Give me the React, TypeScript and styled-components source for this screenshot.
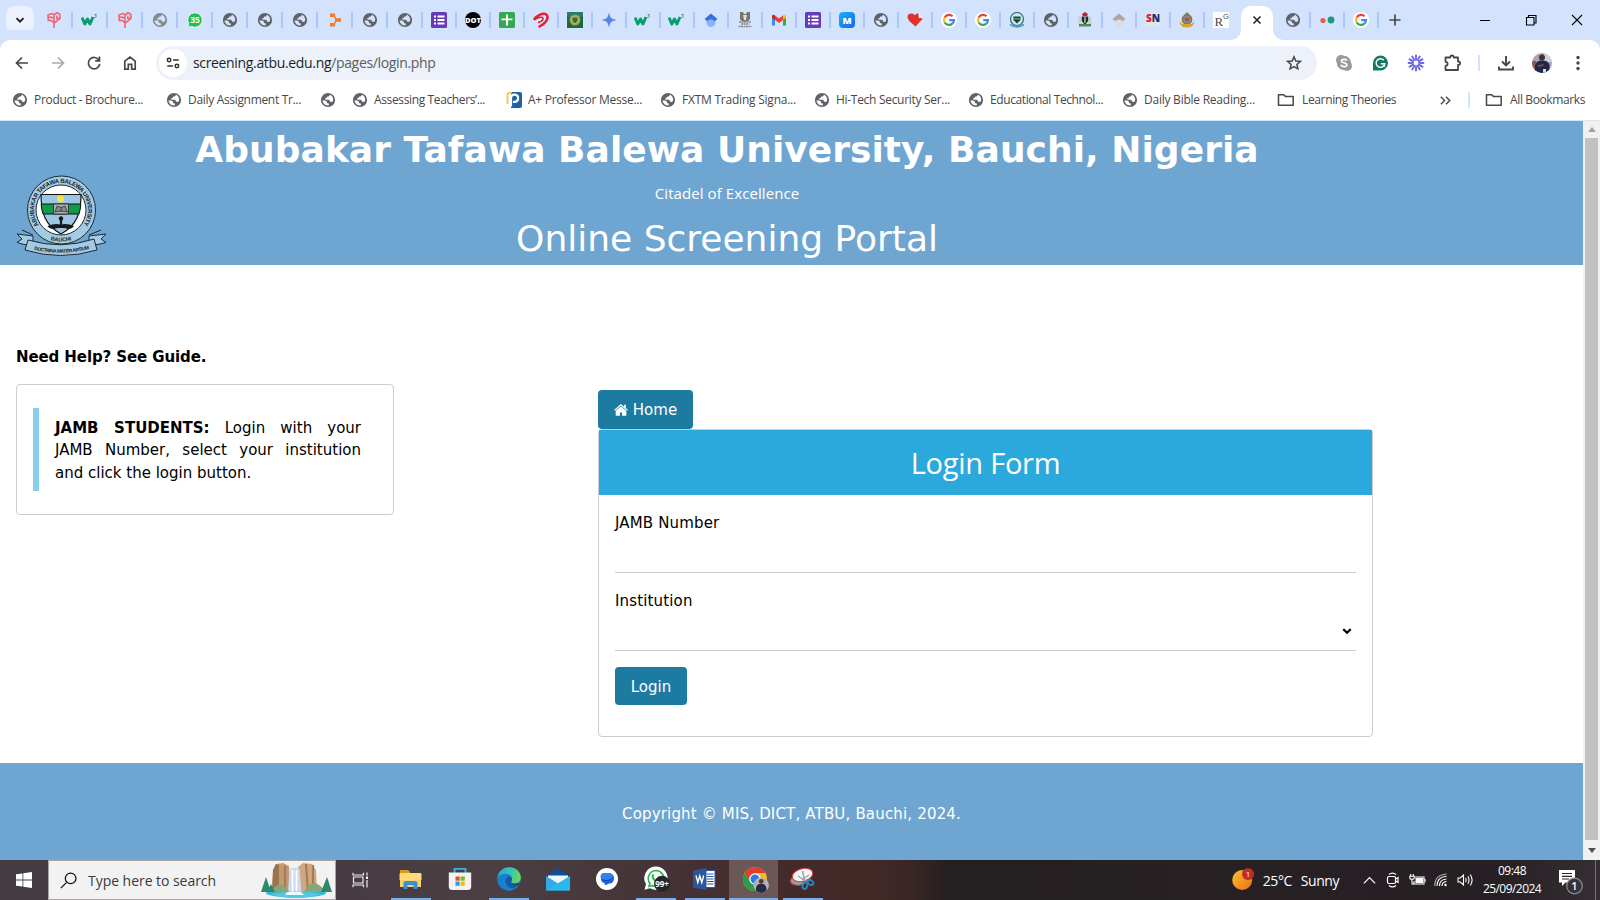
import React from "react";
import styled, { createGlobalStyle } from "styled-components";

const GlobalStyle = createGlobalStyle`
  *, *::before, *::after { box-sizing: border-box; }
  html, body { margin: 0; padding: 0; overflow: hidden; background: #fff; }
  svg { display: block; flex: none; }
`;

const ui = `"Open Sans", "Noto Sans", sans-serif`;
const verdana = `"DejaVu Sans", "Liberation Sans", sans-serif`;

const Screen = styled.div`
  width: 1600px;
  height: 900px;
  display: flex;
  flex-direction: column;
  overflow: hidden;
  font-family: ${ui};
`;

/* ---------- tab strip ---------- */
const TabStrip = styled.div`
  height: 40px;
  background: #d3e3fd;
  display: flex;
  align-items: center;
`;
const TabSearch = styled.div`
  width: 28px;
  height: 28px;
  margin: 0 3px 0 6px;
  border-radius: 9px;
  background: #ecf2fd;
  display: grid;
  place-items: center;
`;
const Tab = styled.div<{ $w: number; $line?: boolean }>`
  width: ${(p) => p.$w}px;
  height: 16px;
  display: flex;
  align-items: center;
  justify-content: center;
  border-right: 2px solid ${(p) => (p.$line === false ? "transparent" : "#a8c7fa")};
`;
const ActiveTab = styled.div`
  width: 32px;
  height: 34px;
  margin: 0 4px 0 2px;
  align-self: flex-end;
  background: #fff;
  border-radius: 10px 10px 0 0;
  display: grid;
  place-items: center;
  padding-bottom: 6px;
  position: relative;
  &::before, &::after {
    content: "";
    position: absolute;
    bottom: 0;
    width: 10px;
    height: 10px;
  }
  &::before { left: -10px; background: radial-gradient(circle at 0 0, transparent 9.5px, #fff 10px); }
  &::after { right: -10px; background: radial-gradient(circle at 100% 0, transparent 9.5px, #fff 10px); }
`;
const WindowControls = styled.div`
  margin-left: auto;
  display: flex;
`;

/* ---------- toolbar ---------- */
const Chrome = styled.div`
  background: #fff;
  box-shadow: 0 -10px 0 #d3e3fd;
  border-radius: 10px 10px 0 0;
`;
const Toolbar = styled.div`
  height: 46px;
  display: flex;
  align-items: center;
  padding: 0 4px;
`;
const ToolSlot = styled.div<{ $w?: number }>`
  width: ${(p) => p.$w ?? 36}px;
  display: flex;
  justify-content: center;
`;
const Omnibox = styled.div`
  width: 1161px;
  height: 34px;
  margin: 0 9px 0 8px;
  border-radius: 17px;
  background: #ecf1fa;
  display: flex;
  align-items: center;
  padding: 0 15px 0 3px;
`;
const SiteChip = styled.div`
  width: 28px;
  height: 28px;
  border-radius: 50%;
  background: #fff;
  display: grid;
  place-items: center;
  margin-right: 6px;
`;
const Text = styled.span<{ $size: number; $color?: string; $ls?: number }>`
  font-size: ${(p) => p.$size}px;
  color: ${(p) => p.$color ?? "#474747"};
  letter-spacing: ${(p) => p.$ls ?? 0}px;
  white-space: nowrap;
`;
const BarText = styled(Text)`
  padding-bottom: 2px;
`;
const Path = styled.span`
  color: #5a5d62;
`;
const Grow = styled.div`
  flex: 1;
`;
const Rule = styled.div<{ $m: string }>`
  width: 2px;
  height: 16px;
  background: #d3e3fd;
  margin: ${(p) => p.$m};
`;

/* ---------- bookmarks ---------- */
const Bookmarks = styled.div`
  height: 34px;
  display: flex;
  align-items: center;
  padding: 0 0 6px 12px;
`;
const Bookmark = styled.div<{ $w: number; $gap?: number }>`
  width: ${(p) => p.$w}px;
  display: flex;
  align-items: center;
  gap: ${(p) => p.$gap ?? 6}px;
`;
const IconBox = styled.div`
  width: 16px;
  display: flex;
  justify-content: center;
`;

/* ---------- page ---------- */
const Viewport = styled.div`
  flex: 1;
  display: flex;
  min-height: 0;
  border-top: 1px solid #dbe7f0;
`;
const Page = styled.div`
  width: 1583px;
  display: flex;
  flex-direction: column;
  font-family: ${verdana};
  font-size: 15px;
  line-height: 22.5px;
  color: #000;
`;
const Header = styled.header`
  height: 144px;
  background: #6fa5d1;
  color: #fff;
  display: flex;
`;
const LogoCol = styled.div`
  width: 132px;
  padding: 53px 0 0 16px;
`;
const TitleCol = styled.div`
  width: 1190px;
  text-align: center;
  white-space: nowrap;
`;
const University = styled.h1`
  margin: 2px 0 0;
  font-size: 36px;
  line-height: 54px;
  letter-spacing: 0.04px;
`;
const Motto = styled.div`
  margin-top: 5px;
  line-height: 22px;
  font-family: ${ui};
  font-size: 15px;
  letter-spacing: 0.08px;
`;
const Portal = styled.div`
  margin-top: 8px;
  font-size: 36px;
  line-height: 54px;
`;
const Main = styled.main`
  flex: 1;
  display: flex;
`;
const Help = styled.section`
  width: 378px;
  margin: 81px 204px 0 16px;
`;
const HelpTitle = styled.div`
  font-weight: 700;
  line-height: 23px;
  letter-spacing: -0.1px;
`;
const HelpCard = styled.div`
  margin-top: 15px;
  height: 131px;
  border: 1px solid #ccc;
  border-radius: 4px;
  padding: 23px 16px;
`;
const Quote = styled.div`
  height: 83px;
  border-left: 6px solid #87ceeb;
  padding: 8.8px 16px 7px;
`;
const QuoteLine = styled.div<{ $last?: boolean }>`
  text-align-last: ${(p) => (p.$last ? "left" : "justify")};
  white-space: nowrap;
`;
const FormCol = styled.section`
  width: 775px;
  padding-top: 125px;
`;
const Button = styled.button<{ $w: number; $h: number; $top?: number }>`
  width: ${(p) => p.$w}px;
  height: ${(p) => p.$h}px;
  border: 0;
  border-radius: 4px;
  background: #1d7ba2;
  color: #fff;
  font: 15px ${verdana};
  padding: ${(p) => p.$top ?? 0}px 0 0;
  display: flex;
  align-items: center;
  justify-content: center;
  gap: 5px;
`;
const FormCard = styled.div`
  height: 308px;
  border: 1px solid #ccc;
  border-radius: 4px;
  background: #fff;
`;
const FormTitle = styled.h2`
  height: 65px;
  margin: 0;
  background: #2ba9dc;
  color: #fff;
  font: 400 29px/66px ${ui};
  letter-spacing: -0.25px;
  text-align: center;
`;
const FormBody = styled.div`
  padding: 17px 16px 16px;
`;
const Label = styled.div`
  line-height: 23px;
  letter-spacing: 0.15px;
`;
const Field = styled.div`
  height: 38px;
  border-bottom: 1px solid #ccc;
  margin-bottom: 17px;
  padding: 0 3px 2px 0;
  display: flex;
  align-items: center;
  justify-content: flex-end;
`;
const Submit = styled.div`
  margin-top: -1px;
`;
const Footer = styled.footer`
  height: 97px;
  background: #6fa5d1;
  color: #fff;
  display: flex;
  align-items: center;
  justify-content: center;
  padding-top: 6px;
  letter-spacing: 0.17px;
`;
const Scrollbar = styled.div`
  width: 17px;
  background: #f1f1f1;
  display: flex;
  flex-direction: column;
  align-items: center;
`;
const ScrollEnd = styled.div<{ $h: number }>`
  height: ${(p) => p.$h}px;
  display: grid;
  place-items: center;
`;
const Thumb = styled.div`
  width: 13px;
  flex: 1;
  background: #c1c1c1;
`;

/* ---------- taskbar ---------- */
const Taskbar = styled.div`
  height: 40px;
  display: flex;
  background: linear-gradient(90deg, #463c43 0, #463c42 350px, #4b3f42 500px, #46363a 620px, #43292a 800px, #422927 870px, #3a2625 910px, #241f20 950px, #272124 1240px, #262024 1500px, #352f33 1600px);
`;
const Start = styled.div`
  width: 48px;
  display: grid;
  place-items: center;
`;
const Search = styled.div`
  width: 288px;
  height: 40px;
  background: #f2f2f2;
  border: 1px solid #a9a5a7;
  display: flex;
  align-items: center;
  gap: 11px;
  padding: 0 3px 0 11px;
`;
const TaskViewSlot = styled.div`
  width: 50px;
  display: grid;
  place-items: center;
`;
const TaskSlot = styled.div<{ $line?: boolean; $active?: boolean }>`
  width: 49px;
  display: flex;
  flex-direction: column;
  align-items: center;
  background: ${(p) => (p.$active ? "#6b5755" : "transparent")};
  &::after {
    content: "";
    width: ${(p) => (p.$active ? 49 : 40)}px;
    height: 2px;
    background: ${(p) => (p.$line ? "#77aef2" : "transparent")};
  }
`;
const TaskIcon = styled.div`
  height: 38px;
  display: grid;
  place-items: center;
`;
const Tray = styled.div`
  margin-left: auto;
  display: flex;
  align-items: center;
`;
const WeatherGroup = styled.div`
  display: flex;
  align-items: center;
  gap: 9px;
  margin-right: 18px;
`;
const TraySlot = styled.div<{ $w: number }>`
  width: ${(p) => p.$w}px;
  display: flex;
  justify-content: center;
`;
const NoticeSlot = styled(TraySlot)`
  padding: 4px 1px 0 0;
`;
const Clock = styled.div`
  width: 70px;
  display: flex;
  flex-direction: column;
  align-items: center;
  line-height: 18px;
`;
const ShowDesktop = styled.div`
  width: 5px;
  height: 40px;
  border-left: 1px solid #77737a;
`;

/* ---------- icons ---------- */
const Globe = ({ c = "#5f6368", bg = "#fff" }: { c?: string; bg?: string }) => (
  <svg width="16" height="16" viewBox="0 0 16 16">
    <circle cx="8" cy="8" r="7.1" fill={c} />
    <path d="M9.800 2.500c0 1.500-.6 2-2 2.100-.9.100-1.100.5-1 1.500-.9.300-1.800.2-2 1 .1.700 1 .6 2.200.6h1.500c1 .1 1.300.7 1.400 1.600.1.700.6.700 1.300.700 1.200-.1 1.800-.8 2-2 .1-2.400-1.200-4.500-3.400-5.500z" fill={bg} />
    <path d="M2.500 8.500h2.500c1.300.1 1.800.7 1.900 1.700.1.800.6.900 1.300 1 .8.300.7 1.200.5 2.200-3.100.4-5.800-1.800-6.200-4.900z" fill={bg} />
  </svg>
);
const tabBg = "#d3e3fd";
const Tree = () => (
  <svg width="16" height="18" viewBox="0 0 16 18" fill="none" stroke="#ee6670" strokeWidth="1.600">
    <path d="M8 17V3M8 3.500L5.500 2.500 2 4l.3 5.500 2.700-.2 3 2.500M2.300 6.500l2.700-.5 3 1.500M8.500 3.500L11 1.800l2.800 1.400.2 4.300-2.500 2.200L8 12M10.800 4.500v3h2.500" />
  </svg>
);
const W3 = () => (
  <svg width="18" height="16" viewBox="0 0 18 16">
    <path d="M1 5.500l2.800 6.500L6.500 7l2.500 5L12 5" fill="none" stroke="#0a9c6c" strokeWidth="2.900" strokeLinejoin="round" />
    <path d="M13.500 2.500h2l-1 1.500c1.400.3 1 2-1.200 1.500" fill="none" stroke="#3aa78a" strokeWidth="1" />
  </svg>
);
const Badge35 = () => (
  <svg width="16" height="16" viewBox="0 0 16 16">
    <path d="M8 .8a7.200 7.200 0 1 1-3.500 13.500L.8 15.300l1-3.600A7.200 7.200 0 0 1 8 .8z" fill="#1fc14b" stroke="#fff" strokeWidth=".8" />
    <text x="8" y="11" fontSize="8.500" fontWeight="700" textAnchor="middle" fill="#fff" fontFamily="Open Sans">35</text>
  </svg>
);
const Zap = () => (
  <svg width="16" height="16" viewBox="0 0 16 16" fill="#f07a2a">
    <path d="M3 1.500h5v3.300h1v1.400h5v3.600H9v1.400H8v3.300H3v-3.500h4.500V9.500H8v-3h-.5V5H3z" />
  </svg>
);
const Forms = () => (
  <svg width="16" height="16" viewBox="0 0 16 16">
    <rect width="16" height="16" rx="1.500" fill="#673ab7" />
    <path d="M3 3.500h2v2H3zM3 7h2v2H3zM3 10.500h2v2H3zM6.500 3.500h7v2h-7zM6.500 7h7v2h-7zM6.500 10.500h7v2h-7z" fill="#fff" />
  </svg>
);
const Dot = () => (
  <svg width="16" height="16" viewBox="0 0 16 16">
    <circle cx="8" cy="8" r="8" fill="#000" />
    <text x="8" y="10.800" fontSize="7.500" fontWeight="800" textAnchor="middle" fill="#fff" fontFamily="Open Sans">DOT</text>
  </svg>
);
const Sheets = () => (
  <svg width="16" height="16" viewBox="0 0 16 16">
    <rect width="16" height="16" rx="1.500" fill="#34a853" />
    <path d="M7 2.500h2v4h4.500v1.800H9v5.200H7V8.300H2.500V6.500H7z" fill="#fff" />
  </svg>
);
const Airtel = () => (
  <svg width="16" height="16" viewBox="0 0 16 16" fill="none" stroke="#e4202c" strokeLinecap="round">
    <path d="M1.500 7C4 3.200 10 .5 13 2.300c3 2.200 1.500 8-6.500 12.200" strokeWidth="2.500" />
    <path d="M2 7.500C5.500 5 9.500 4.500 10 6s-2 3.500-4.500 4.500" strokeWidth="1.500" />
  </svg>
);
const GreenCrest = () => (
  <svg width="16" height="16" viewBox="0 0 16 16">
    <rect width="16" height="16" fill="#1c6a3c" />
    <path d="M0 0h16v5H0z" fill="#2a7c6a" />
    <circle cx="8" cy="8" r="5.500" fill="#9fa24e" />
    <path d="M5 5h6v4l-3 3-3-3z" fill="#3d6b36" stroke="#ddd79a" strokeWidth=".7" />
  </svg>
);
const Gemini = () => (
  <svg width="16" height="16" viewBox="0 0 16 16">
    <path d="M8 1.500C8.600 5.500 10.500 7.400 14.500 8 10.500 8.600 8.600 10.500 8 14.500 7.400 10.500 5.500 8.600 1.500 8 5.500 7.400 7.400 5.500 8 1.500z" fill="#5086e0" stroke="#5086e0" strokeWidth=".6" />
  </svg>
);
const Scholar = ({ a = "#3a6fd8", b = "#8ab4f8" }: { a?: string; b?: string }) => (
  <svg width="16" height="16" viewBox="0 0 16 16">
    <path d="M3.500 7h9v3.500a4.500 4.500 0 0 1-9 0z" fill={b} />
    <path d="M8 1.500L14.500 7l-3 2.300C10 7 6 7 4.500 9.300L1.500 7z" fill={a} />
  </svg>
);
const Lion = () => (
  <svg width="16" height="16" viewBox="0 0 16 16">
    <path d="M3 0h3l1 2h2l1-2h3v7l-2 2.500H5L3 7z" fill="#77736f" />
    <path d="M6 3h4l-1 5H7z" fill="#ddd" />
    <path d="M2 10h12M4 12h8M1.500 14.500h13" stroke="#8d8a87" strokeWidth="1.500" strokeDasharray="2 .5" />
  </svg>
);
const Gmail = () => (
  <svg width="16" height="16" viewBox="0 0 16 16">
    <path d="M1 4v9.500h3V7z" fill="#4285f4" />
    <path d="M15 4v9.500h-3V7z" fill="#34a853" />
    <path d="M4 3.600V8l4 3 4-3V3.600L8 6.600z" fill="#ea4335" />
    <path d="M1 4.500C1 2.500 3 2.300 4 3.400V8L1 5.800z" fill="#c5221f" />
    <path d="M15 4.500c0-2-2-2.200-3-1.100V8l3-2.200z" fill="#fbbc04" />
  </svg>
);
const MBlue = () => (
  <svg width="16" height="16" viewBox="0 0 16 16">
    <defs><linearGradient id="mb" x1="0" y1="0" x2="1" y2="1"><stop stopColor="#14b5f7" /><stop offset="1" stopColor="#1465f0" /></linearGradient></defs>
    <rect width="16" height="16" rx="4" fill="url(#mb)" />
    <text x="8" y="11.500" fontSize="9.500" fontWeight="800" textAnchor="middle" fill="#fff" fontFamily="Open Sans">M</text>
  </svg>
);
const Heart = () => (
  <svg width="16" height="16" viewBox="0 0 16 16">
    <path d="M8.500 14.500C6 12 .5 8.500.5 5c0-3.800 5-4.500 7.500-1.800C9 2 10 1.300 10.800 1.200L15.500 7z" fill="#e0322c" />
    <path d="M11.500 1.500l.3 4.500 3.500-.3z" fill="#f4f6fb" />
  </svg>
);
const Google = () => (
  <svg width="16" height="16" viewBox="0 0 16 16">
    <circle cx="8" cy="8" r="8" fill="#fff" />
    <g fill="none" strokeWidth="2.200">
      <path d="M11.600 4.200A5 5 0 0 0 3.700 5.500" stroke="#ea4335" />
      <path d="M3.700 5.500a5 5 0 0 0 0 5" stroke="#fbbc05" />
      <path d="M3.700 10.500a5 5 0 0 0 7.600 1.200" stroke="#34a853" />
      <path d="M11.300 11.700A5 5 0 0 0 13 8.200H8.200" stroke="#4285f4" />
    </g>
  </svg>
);
const Crest = () => (
  <svg width="16" height="16" viewBox="0 0 16 16">
    <circle cx="8" cy="7" r="6.500" fill="#cfe6ee" stroke="#2e6d7c" strokeWidth="1.200" />
    <path d="M4.500 4.500h7v3.500L8 11.500 4.500 8z" fill="#2b3c40" />
    <path d="M4.500 6h7v1.600h-7z" fill="#3fa06a" />
    <path d="M1 12.500c4 3 10 3 14 0" stroke="#4ba1bd" strokeWidth="1.800" fill="none" />
  </svg>
);
const Arms = () => (
  <svg width="16" height="16" viewBox="0 0 16 16">
    <path d="M5 2l3-2 3 2-1 2H6z" fill="#b52b2b" />
    <path d="M1.500 4.500h3L5 13H1.500zM14.500 4.500h-3L11 13h3.500z" fill="#c6cfd0" />
    <path d="M4.800 4.500h6.400V9L8 13 4.800 9z" fill="#262b27" />
    <path d="M2 12h12v2.500H2z" fill="#4a8f4c" />
    <path d="M8 5v6" stroke="#fff" />
  </svg>
);
const SN = () => (
  <svg width="18" height="16" viewBox="0 0 18 16">
    <path d="M1 1l16-.5-1 13L2 15z" fill="#e3e6ea" />
    <text x="9" y="10" fontSize="10" fontWeight="800" textAnchor="middle" fontFamily="Open Sans" fill="#d5203f">S<tspan fill="#1d2f6b">N</tspan></text>
  </svg>
);
const GoldCrest = () => (
  <svg width="16" height="17" viewBox="0 0 16 17">
    <path d="M5 3l3-3 3 3-1 2H6z" fill="#7b8a5e" />
    <circle cx="8" cy="7.500" r="4.600" fill="#7d8aa0" stroke="#8b7a3b" strokeWidth="1.600" />
    <path d="M.5 9.500c1 5 4 6 7.500 6s6.500-1 7.500-6l-3 2.500h-9z" fill="#d2a52e" />
    <path d="M6 6h4v3H6z" fill="#b4503c" />
  </svg>
);
const RG = () => (
  <svg width="16" height="16" viewBox="0 0 16 16">
    <rect width="16" height="16" fill="#fff" />
    <text x="1.500" y="14" fontSize="13" fontFamily="Liberation Serif" fill="#4a4a4a">R</text>
    <text x="10" y="7" fontSize="7.500" fontFamily="Liberation Sans" fill="#4a4a4a">G</text>
  </svg>
);
const Dots = () => (
  <svg width="16" height="16" viewBox="0 0 16 16">
    <circle cx="4" cy="8.500" r="2.600" fill="#e8603a" />
    <circle cx="12" cy="8" r="3.400" fill="#169c80" />
  </svg>
);
const PP = () => (
  <svg width="16" height="16" viewBox="0 0 16 16">
    <path d="M5 0h9a2 2 0 0 1 2 2v12a2 2 0 0 1-2 2H5z" fill="#1b63a8" />
    <path d="M1.500 12V3a2.500 2.500 0 0 1 2.500-2.300h2" stroke="#f0c44c" strokeWidth="1.800" fill="none" />
    <path d="M5 14.500V5.500a3.600 3.600 0 1 1 3.600 4.300H7" stroke="#fff" strokeWidth="2.200" fill="none" />
  </svg>
);
const Folder = () => (
  <svg width="18" height="14" viewBox="0 0 18 14" fill="none" stroke="#474747" strokeWidth="1.500">
    <path d="M1.500 1.800h5.300l1.800 1.800h7.600v8.600H1.500z" strokeLinejoin="round" />
  </svg>
);
const S = ({ d, w = 16, c = "#474747", sw = 1.7 }: { d: string; w?: number; c?: string; sw?: number }) => (
  <svg width={w} height={w} viewBox="0 0 16 16" fill="none" stroke={c} strokeWidth={sw}><path d={d} /></svg>
);
const Skype = () => (
  <svg width="18" height="18" viewBox="0 0 18 18">
    <circle cx="6" cy="6" r="5" fill="#9a9a9a" /><circle cx="12" cy="12" r="5" fill="#9a9a9a" /><circle cx="9" cy="9" r="7.200" fill="#9a9a9a" />
    <path d="M12 6.500C11 5 6.300 4.800 6.300 7c0 2.300 5.600 1.300 5.600 3.900 0 2.200-4.900 2.300-6-.1" stroke="#fff" strokeWidth="1.600" fill="none" />
  </svg>
);
const Grammarly = () => (
  <svg width="16" height="16" viewBox="0 0 16 16">
    <path d="M8.500.5a7.500 7.500 0 1 1 0 15H1V8A7.500 7.500 0 0 1 8.500.5z" fill="#117a62" />
    <path d="M11.800 5.300a4.300 4.300 0 1 0 .9 3.500H8.700M12.400 8.800v3" stroke="#fff" strokeWidth="1.500" fill="none" />
  </svg>
);
const Burst = () => (
  <svg width="18" height="18" viewBox="-9 -9 18 18" stroke="#6d63ea" strokeWidth="1.900">
    {Array.from({ length: 12 }, (_, i) => (
      <line key={i} x1="0" y1="-3.300" x2="0" y2="-8.200" transform={`rotate(${i * 30})`} />
    ))}
    <circle r="3" fill="none" strokeWidth="1.200" />
  </svg>
);
const Puzzle = () => (
  <svg width="18" height="18" viewBox="0 0 18 18" fill="none" stroke="#474747" strokeWidth="1.800" strokeLinejoin="round">
    <path d="M2.500 3.500h4.700C7.200.8 10.800.8 10.800 3.500h4.200v4c2.800 0 2.800 3.500 0 3.500v5H2.500v-4.200c2.800 0 2.800-4 0-4z" />
  </svg>
);
const Avatar = () => (
  <svg width="20" height="20" viewBox="0 0 20 20">
    <defs><clipPath id="av"><circle cx="10" cy="10" r="10" /></clipPath></defs>
    <g clipPath="url(#av)">
      <rect width="20" height="20" fill="#a9a3ac" />
      <path d="M12 0h8v9h-8z" fill="#c9d3e2" />
      <path d="M0 8h4v12H0z" fill="#8a5a50" />
      <path d="M3 20V12c2-4 4-4.500 7-4.500s6 .5 7.500 4.500v8z" fill="#20294a" />
      <circle cx="10" cy="4.500" r="3" fill="#4b2f2a" />
      <path d="M6 12l6-1-1 2-5 1z" fill="#7a4a3f" />
      <path d="M11 16h3v4h-3z" fill="#bfe6e6" />
    </g>
  </svg>
);
const HomeSolid = () => (
  <svg width="14" height="12" viewBox="0 0 14 12" fill="#fff">
    <path d="M7 0L0 5.900l.8.900L7 1.700l6.200 5.100.8-.9-2.200-1.800V.8h-1.700v1.900z" />
    <path d="M7 2.400L1.700 6.800V11.700h4.200V8.400h2.200v3.300h4.200V6.800z" />
  </svg>
);
const Emblem = () => (
  <svg width="92" height="84" viewBox="0 0 92 84">
    <defs>
      <path id="ring" d="M23.300 52A27 27 0 1 1 66.700 52" />
      <path id="bau" d="M31 65Q45 70 59 65" />
      <path id="rib" d="M15 75Q45 83 77 74" />
    </defs>
    <circle cx="45.500" cy="36" r="34" fill="#a4cbe4" stroke="#1c2a33" strokeWidth="1" />
    <circle cx="45" cy="36" r="25" fill="#fff" stroke="#1c2a33" strokeWidth="1" />
    <path d="M25 20.500h40c0 18-4 31-20 39.500C29 51.500 25 38.500 25 20.500z" fill="#9cc7e4" stroke="#111" strokeWidth="1.200" />
    <path d="M25.200 30h39.600c-.4 4-.8 7-1.800 10H27c-1-3-1.600-6-1.800-10z" fill="#12994a" stroke="#111" strokeWidth="1" />
    <path d="M37.500 30h15v10h-15z" fill="#a9b2b4" stroke="#222" strokeWidth=".8" />
    <path d="M39 38l2-6 4 1.500 4-1.500 2.500 6-6.500-1zM45 33v5" fill="#85898a" stroke="#333" strokeWidth=".8" />
    <circle cx="44.500" cy="25" r="3.500" fill="#f6e34a" />
    <path d="M31.500 52q7-3 13-1.500 7-1.500 13.500 1.500-2 3-6 3-3-1.500-7-1-4-.5-7 1-5 0-6.500-3z" fill="#14191c" />
    <path d="M45 44v7" stroke="#14191c" strokeWidth="2.200" /><circle cx="45" cy="44.500" r="2.200" fill="#14191c" />
    <path d="M1 60l16 2v9l-9-.5-7-2 5-3.500zM90 60l-17 2v9l9-.5 8-2-5-3.500zM6 56l11 5M85 56l-12 5" fill="#a4cbe4" stroke="#1c2a33" strokeWidth="1" />
    <path d="M12 66q33 10 66-1l3 11q-37 11-72 0z" fill="#a4cbe4" stroke="#1c2a33" strokeWidth="1" />
    <g fontFamily="Liberation Sans" fontWeight="700" fill="#1a2329">
      <text fontSize="6"><textPath href="#ring" textLength="116" startOffset="1">ABUBAKAR TAFAWA BALEWA UNIVERSITY</textPath></text>
      <text fontSize="5.500"><textPath href="#bau" startOffset="50%" textAnchor="middle">BAUCHI</textPath></text>
      <text fontSize="5"><textPath href="#rib" textLength="56" startOffset="3">DOCTRINA MATER ARTIUM</textPath></text>
    </g>
  </svg>
);
const Waterfall = () => (
  <svg width="71" height="36" viewBox="0 0 71 36">
    <ellipse cx="35" cy="31" rx="30" ry="4.500" fill="#35b7d6" />
    <path d="M11 30L12 8l3-6 7-1 6 3 2 26z" fill="#c39a70" />
    <path d="M12 8l3-6 3 1v27h-7z" fill="#9a7350" />
    <path d="M38 30L37 5l5-4 9 1 4 6 1 22z" fill="#cfa880" />
    <path d="M45 2l2 27M52 3v25M24 4v24" stroke="#a57c56" strokeWidth="2.200" />
    <path d="M28.500 7q5-3 10 0l2 24H27z" fill="#c9dcf2" />
    <path d="M31.500 8v22M35.500 8v22" stroke="#fff" strokeWidth="1.600" />
    <path d="M10 30q9-16 19 1zM43 30q9-17 21-1z" fill="#86a678" />
    <path d="M5 15L0 30h10zM66 15l-6 15h11zM10 22l-4 8h8z" fill="#2c8a6c" />
    <path d="M10 32q24-5 50 0-10 4-25 4t-25-4z" fill="#4fc8e0" />
    <path d="M26 30h14l3 3H24z" fill="#e8fbff" />
  </svg>
);
const WinLogo = () => (
  <svg width="16" height="16" viewBox="0 0 16 16" fill="#fff">
    <path d="M0 2.300l6.500-.9v6.200H0zM7.300 1.300L16 0v7.600H7.300zM0 8.400h6.500v6.200L0 13.700zM7.300 8.400H16V16l-8.700-1.300z" />
  </svg>
);
const TaskView = () => (
  <svg width="18" height="16" viewBox="0 0 18 16" fill="none" stroke="#eee" strokeWidth="1.200">
    <path d="M1 .8v2.200h10.500V.8M1.500 5h9.500v6H1.500zM1 15.200V13h10.500v2.200M15 .5v3M15 8v7.500" />
    <rect x="14" y="4.500" width="2" height="2.500" fill="#fff" stroke="none" />
  </svg>
);
const Explorer = () => (
  <svg width="23" height="19" viewBox="0 0 23 19">
    <path d="M1 0h8l2 2v4H1z" fill="#d79b22" />
    <path d="M1 3h21v14H1z" fill="#fad368" />
    <path d="M0.500 3.500h22V10h-22z" fill="#ffd975" />
    <path d="M4.500 19v-6q0-2 2-2h10q2 0 2 2v6h-4v-4h-6v4z" fill="#3a8fd2" />
  </svg>
);
const Store = () => (
  <svg width="24" height="24" viewBox="0 0 24 24">
    <path d="M6.500 6V1.800h11V6" stroke="#35b5e8" strokeWidth="1.800" fill="none" />
    <path d="M.8 5.500h22.400v14q0 3.500-3.500 3.500H4.300Q.8 23 .8 19.500z" fill="#f3f3f3" />
    <path d="M7.500 9.500h4.200v4.200H7.500z" fill="#e3502a" /><path d="M12.600 9.500h4.200v4.200h-4.200z" fill="#7db72f" />
    <path d="M7.500 14.600h4.200v4.200H7.500z" fill="#2b9fe0" /><path d="M12.600 14.600h4.200v4.200h-4.200z" fill="#f7b71c" />
  </svg>
);
const Edge = () => (
  <svg width="24" height="24" viewBox="0 0 24 24">
    <defs>
      <linearGradient id="eg" x1="0" y1=".3" x2="1" y2=".5"><stop stopColor="#2aa6dd" /><stop offset=".6" stopColor="#38c8b0" /><stop offset="1" stopColor="#71d84e" /></linearGradient>
    </defs>
    <circle cx="12" cy="12" r="11.800" fill="#1b7fd0" />
    <path d="M.3 11C1.500 4 6.500.2 12 .2c7 0 11.800 4.800 11.800 10 0 4-3 6-6 6-2.500 0-4-1-3.800-1.900.2-.8 1-1.300 1-2.900 0-2.500-3-4.700-6.500-4.700C5 6.700 1.500 8.500.3 11z" fill="url(#eg)" />
    <path d="M8.500 14c0-2.500 1.500-4 3.500-4.800 2 .5 3 2 3 3.300 0 1.500-1 2-1 2.900.2 1.400 4 2.300 8 .6-1 3-4 5-6.500 5.200-4 0-7-3.500-7-7.200z" fill="#135da6" />
    <path d="M14 14.800c.5 2 5 2.600 8.600.8l1.400 1-3 2.500-6-2z" fill="#463a3d" opacity=".7" />
  </svg>
);
const Mail = () => (
  <svg width="24" height="23" viewBox="0 0 24 23">
    <path d="M0 8l12-8 12 8v3H0z" fill="#0e4f96" />
    <path d="M2 7.500h20V17H2z" fill="#eef7fd" />
    <path d="M0 8l12 7.500L24 8v14.500H0z" fill="#35a8e8" />
    <path d="M24 8L0 22.500h24z" fill="#27bdf0" opacity=".8" />
  </svg>
);
const Messages = () => (
  <svg width="22" height="22" viewBox="0 0 22 22">
    <circle cx="11" cy="11" r="11" fill="#fff" />
    <path d="M9 5h4.500A5.200 5.200 0 0 1 18 10.500c0 3-2 5-5 5-1.500 1-3 1.500-4.500 1.500l.3-1.800C5.500 15 5 12 5 10.500z" fill="#1b62dd" />
    <path d="M7.500 5h5c3 0 4 2 4 3.500S15 12 12.500 12H8.500Q4.500 12 4.500 8.500 5 5.300 7.500 5z" fill="#2f80f3" />
    <path d="M6.500 11.500c3 1.500 6.500 1.500 9-1" stroke="#123f9e" fill="none" />
  </svg>
);
const WhatsApp = () => (
  <svg width="28" height="26" viewBox="0 0 28 26">
    <path d="M14 .5a11.700 11.700 0 1 1-6 21.800l-5.500 1.500 1.500-5.500A11.700 11.700 0 0 1 14 .5z" fill="#fff" />
    <path d="M14 4.500a8 8 0 1 1-4 15l-3 .8.900-3A8 8 0 0 1 14 4.500z" fill="none" stroke="#27b84a" strokeWidth="1.600" />
    <path d="M11.500 8.500c-2.500 2 1 7.500 5 8" stroke="#27b84a" strokeWidth="2" fill="none" />
    <circle cx="20" cy="17.800" r="8" fill="#26262a" />
    <text x="20" y="20.800" fontSize="8" fontWeight="700" fontFamily="Open Sans" fill="#fff" textAnchor="middle">99+</text>
  </svg>
);
const Word = () => (
  <svg width="23" height="22" viewBox="0 0 23 22">
    <path d="M12 2.500h10v17H12z" fill="#fff" stroke="#2b579a" />
    <path d="M14 6h6.500M14 8.500h6.500M14 11h6.500M14 13.500h6.500M14 16h6.500" stroke="#2b579a" strokeWidth="1.200" />
    <path d="M0 2.500L13.500 0v22L0 19.500z" fill="#2b579a" />
    <path d="M3 7.500l1.800 7L6.800 8l2 6.500 1.900-7" stroke="#fff" strokeWidth="1.400" fill="none" />
  </svg>
);
const ChromeLogo = () => (
  <svg width="31" height="31" viewBox="-4 -3 31 31">
    <circle cx="13" cy="12" r="12" fill="#f5bd1c" />
    <path d="M2.600 6A12 12 0 0 1 23.400 6H13L8.500 15z" fill="#dd4032" />
    <path d="M2.600 6A12 12 0 0 0 13 24l5-9H8.500z" fill="#2a9d4b" />
    <circle cx="13" cy="12" r="5.800" fill="#fff" /><circle cx="13" cy="12" r="4.500" fill="#2f78e8" />
    <g transform="translate(11.500 10.500) scale(.77)">
      <circle cx="10" cy="10" r="10" fill="#b5b1ba" />
      <path d="M3 17c0-6 2-9 7-9s7 3 7 9q-3 3-7 3t-7-3z" fill="#222a45" /><circle cx="10" cy="5" r="3" fill="#54362f" />
    </g>
  </svg>
);
const Snip = () => (
  <svg width="25" height="24" viewBox="0 0 25 24">
    <ellipse cx="9.500" cy="13" rx="9" ry="5" transform="rotate(-10 9.500 13)" fill="#a59a9a" stroke="#a35c5c" />
    <ellipse cx="12.500" cy="8" rx="10.500" ry="6.300" transform="rotate(-15 12.500 8)" fill="#f6f6f6" stroke="#d2403a" strokeWidth="1.100" />
    <path d="M12.500 4l2.500 11M19 8l-7 5M8 9l9 6" stroke="#98a2a8" strokeWidth="1.400" />
    <ellipse cx="15" cy="18.500" rx="2.300" ry="3.500" transform="rotate(15 15 18.500)" fill="none" stroke="#2d84bd" strokeWidth="2" />
    <ellipse cx="20.500" cy="15.500" rx="3" ry="2.200" transform="rotate(35 20.500 15.500)" fill="none" stroke="#2d84bd" strokeWidth="2" />
  </svg>
);
const Weather = () => (
  <svg width="22" height="24" viewBox="0 0 22 24">
    <defs><linearGradient id="sun" x1="0" y1="0" x2="1" y2="1"><stop stopColor="#f8c32c" /><stop offset="1" stopColor="#ef6c1a" /></linearGradient></defs>
    <circle cx="10.200" cy="12" r="10" fill="url(#sun)" />
    <circle cx="16" cy="6" r="6" fill="#c22b23" />
    <text x="16" y="9" fontSize="8" textAnchor="middle" fill="#fff" fontFamily="Open Sans">1</text>
  </svg>
);
const Cam = () => (
  <svg width="14" height="16" viewBox="0 0 14 16" fill="none" stroke="#fff" strokeWidth="1.200">
    <rect x="1.500" y="4.500" width="8" height="7" rx="1.500" /><path d="M9.500 7l2.500-1.500v5L9.500 9M3 2.500Q6.500-.3 10 2.500M3 13.500q3.500 2.800 7 0" />
  </svg>
);
const Battery = () => (
  <svg width="17" height="14" viewBox="0 0 17 14" fill="none" stroke="#fff" strokeWidth="1.100">
    <path d="M6 4h9v7H5V8" /><rect x="7" y="5.500" width="6.500" height="4" fill="#fff" /><path d="M16 6v3M1.700 1v2M4.300 1v2M.8 3.200h4.400v1.500q0 1.500-2.200 1.500T.8 4.700zM3 6.500V11h2" />
  </svg>
);
const Wifi = () => (
  <svg width="14" height="14" viewBox="0 0 14 14" fill="none" stroke="#fff" strokeWidth="1.100">
    <circle cx="11.500" cy="12" r="1.200" fill="#fff" stroke="none" />
    <path d="M8 13q0-4 4.500-4.500M5.500 13q0-6.500 7-7M3 13Q3 4 12.500 3.200" /><path d="M.8 13Q.5 2 12.500 1" stroke="#aaa" />
  </svg>
);
const Volume = () => (
  <svg width="17" height="14" viewBox="0 0 17 14" fill="none" stroke="#fff" strokeWidth="1.100">
    <path d="M1 5h2.300L6.500 2v10L3.300 9H1zM8.500 5q1.300 2 0 4M10.800 3.300q2.500 3.700 0 7.400M13.200 1.500q3.800 5.500 0 11" />
  </svg>
);
const Notice = () => (
  <svg width="25" height="26" viewBox="0 0 25 26">
    <path d="M1 1h16v12.500H7.500L4 17v-3.500H1z" fill="#fff" />
    <path d="M4 4.500h10M4 7.300h10M4 10h7" stroke="#2a2529" strokeWidth="1.200" />
    <circle cx="16.500" cy="17" r="7.800" fill="#37323a" stroke="#8b888c" strokeWidth="1.200" />
    <text x="16.500" y="21" fontSize="11" fontWeight="600" textAnchor="middle" fill="#fff" fontFamily="Open Sans">1</text>
  </svg>
);

const G = () => <Globe bg={tabBg} />;
const firstTabs = [Tree, W3, Tree, () => <Globe c="#85898e" bg={tabBg} />, Badge35, G, G, G, Zap, G, G];
const moreTabs = [
  Forms, Dot, Sheets, Airtel, GreenCrest, Gemini, W3, W3, Scholar, Lion, Gmail, Forms, MBlue, G, Heart,
  Google, Google, Crest, G, Arms, () => <Scholar a="#a8a8a8" b="#dcdcdc" />, SN, GoldCrest, RG,
];
const bookmarks: { label?: string; w: number; icon?: React.FC; ls?: number }[] = [
  { label: "Product - Brochure...", w: 154, ls: -0.31 },
  { label: "Daily Assignment Tr...", w: 154, ls: -0.32 },
  { w: 32 },
  { label: "Assessing Teachers’...", w: 154, ls: -0.37 },
  { label: "A+ Professor Messe...", w: 154, icon: PP, ls: -0.26 },
  { label: "FXTM Trading Signa...", w: 154, ls: -0.23 },
  { label: "Hi-Tech Security Ser...", w: 154, ls: -0.3 },
  { label: "Educational Technol...", w: 154, ls: -0.4 },
  { label: "Daily Bible Reading...", w: 156, ls: -0.24 },
];
const tasks: { Icon: React.FC; line?: boolean; active?: boolean }[] = [
  { Icon: Explorer, line: true }, { Icon: Store }, { Icon: Edge, line: true }, { Icon: Mail }, { Icon: Messages },
  { Icon: WhatsApp, line: true }, { Icon: Word, line: true }, { Icon: ChromeLogo, line: true, active: true }, { Icon: Snip, line: true },
];

export default function App() {
  return (
    <Screen>
      <GlobalStyle />
      <TabStrip>
        <TabSearch><S d="M4.500 6.200L8 9.700l3.500-3.500" c="#1f1f1f" sw={1.900} /></TabSearch>
        {firstTabs.map((I, i) => <Tab key={i} $w={i ? 35 : 36}><I /></Tab>)}
        {moreTabs.map((I, i) => <Tab key={i} $w={34} $line={i < moreTabs.length - 1}><I /></Tab>)}
        <ActiveTab><S d="M4 4l8 8M12 4l-8 8" c="#1f1f1f" sw={1.700} w={14} /></ActiveTab>
        <Tab $w={34}><G /></Tab>
        <Tab $w={34}><Dots /></Tab>
        <Tab $w={34}><Google /></Tab>
        <Tab $w={34} $line={false}><S d="M8 2.500v11M2.500 8h11" /></Tab>
        <WindowControls>
          <ToolSlot $w={46}><S d="M3 8.500h10" c="#000" sw={1} /></ToolSlot>
          <ToolSlot $w={46}><S d="M3.500 5.500h7.500v7.500H3.500zM5.500 5.500v-2h7.500v7.500h-2" c="#000" sw={1.100} /></ToolSlot>
          <ToolSlot $w={46}><S d="M3 3l10 10M13 3L3 13" c="#000" sw={1.100} /></ToolSlot>
        </WindowControls>
      </TabStrip>
      <Chrome>
        <Toolbar>
          <ToolSlot><S d="M14 8H3M8 2.500L2.500 8 8 13.500" /></ToolSlot>
          <ToolSlot><S d="M2 8h11M8 2.500L13.500 8 8 13.500" c="#ababab" /></ToolSlot>
          <ToolSlot><S d="M13 5.300A5.700 5.700 0 1 0 13.700 9M13.500 1.500v4.300H9.200" /></ToolSlot>
          <ToolSlot><S d="M2.800 6.200L8 2l5.200 4.200v8H9.700V9.300H6.300v4.900H2.800z" /></ToolSlot>
          <Omnibox>
            <SiteChip><S d="M1.500 4.500a2 2 0 1 0 4 0 2 2 0 1 0-4 0M8 4.500h6.500M1.500 11.500H8M10.500 11.500a2 2 0 1 0 4 0 2 2 0 1 0-4 0" c="#303030" w={14} /></SiteChip>
            <BarText $size={14} $color="#1f1f1f" $ls={-0.34}>screening.atbu.edu.ng<Path>/pages/login.php</Path></BarText>
            <Grow />
            <S d="M8 1.800l1.800 4.200 4.500.4-3.400 3 1 4.400L8 11.500l-3.900 2.300 1-4.400-3.400-3 4.500-.4z" sw={1.500} w={16} />
          </Omnibox>
          <ToolSlot><Skype /></ToolSlot>
          <ToolSlot><Grammarly /></ToolSlot>
          <ToolSlot><Burst /></ToolSlot>
          <ToolSlot><Puzzle /></ToolSlot>
          <Rule $m="0 8px" />
          <ToolSlot><S d="M8 1v9M4 6.500l4 4 4-4M1 11.500v3h14v-3" w={16} sw={1.900} /></ToolSlot>
          <ToolSlot><Avatar /></ToolSlot>
          <ToolSlot>
            <svg width="16" height="16" viewBox="0 0 16 16" fill="#474747"><circle cx="8" cy="2.500" r="1.700" /><circle cx="8" cy="8" r="1.700" /><circle cx="8" cy="13.500" r="1.700" /></svg>
          </ToolSlot>
        </Toolbar>
        <Bookmarks>
          {bookmarks.map((b, i) => (
            <Bookmark key={i} $w={b.w}>
              <IconBox>{b.icon ? <b.icon /> : <Globe />}</IconBox>
              {b.label && <BarText $size={12} $ls={b.ls}>{b.label}</BarText>}
            </Bookmark>
          ))}
          <Bookmark $w={159} $gap={8}><IconBox><Folder /></IconBox><BarText $size={12} $ls={-0.36}>Learning Theories</BarText></Bookmark>
          <IconBox><S d="M3 4l4 4-4 4M8.500 4l4 4-4 4" sw={1.500} w={15} /></IconBox>
          <Rule $m="0 16px 0 15px" />
          <Bookmark $w={110} $gap={8}><IconBox><Folder /></IconBox><BarText $size={12} $ls={-0.37}>All Bookmarks</BarText></Bookmark>
        </Bookmarks>
      </Chrome>
      <Viewport>
        <Page>
          <Header>
            <LogoCol><Emblem /></LogoCol>
            <TitleCol>
              <University>Abubakar Tafawa Balewa University, Bauchi, Nigeria</University>
              <Motto>Citadel of Excellence</Motto>
              <Portal>Online Screening Portal</Portal>
            </TitleCol>
          </Header>
          <Main>
            <Help>
              <HelpTitle>Need Help? See Guide.</HelpTitle>
              <HelpCard>
                <Quote>
                  <QuoteLine><b>JAMB STUDENTS:</b> Login with your</QuoteLine>
                  <QuoteLine>JAMB Number, select your institution</QuoteLine>
                  <QuoteLine $last>and click the login button.</QuoteLine>
                </Quote>
              </HelpCard>
            </Help>
            <FormCol>
              <Button $w={95} $h={39}><HomeSolid />Home</Button>
              <FormCard>
                <FormTitle>Login Form</FormTitle>
                <FormBody>
                  <Label>JAMB Number</Label>
                  <Field />
                  <Label>Institution</Label>
                  <Field><S d="M3 5.500l5 4.800 5-4.800" c="#000" sw={2.800} w={12} /></Field>
                  <Submit><Button $w={72} $h={38} $top={2}>Login</Button></Submit>
                </FormBody>
              </FormCard>
            </FormCol>
          </Main>
          <Footer>Copyright © MIS, DICT, ATBU, Bauchi, 2024.</Footer>
        </Page>
        <Scrollbar>
          <ScrollEnd $h={17}><svg width="8" height="5"><path d="M4 0l4 5H0z" fill="#a3a3a3" /></svg></ScrollEnd>
          <Thumb />
          <ScrollEnd $h={20}><svg width="8" height="5"><path d="M4 5L0 0h8z" fill="#505050" /></svg></ScrollEnd>
        </Scrollbar>
      </Viewport>
      <Taskbar>
        <Start><WinLogo /></Start>
        <Search>
          <S d="M.8 15.200L6 10M5 6a5 5 0 1 0 10 0A5 5 0 1 0 5 6" c="#111" sw={1.200} w={17} />
          <Text $size={14} $color="#3a3a3a" $ls={-0.04}>Type here to search</Text>
          <Grow />
          <Waterfall />
        </Search>
        <TaskViewSlot><TaskView /></TaskViewSlot>
        {tasks.map((t, i) => <TaskSlot key={i} $line={t.line} $active={t.active}><TaskIcon><t.Icon /></TaskIcon></TaskSlot>)}
        <Tray>
          <WeatherGroup>
            <Weather />
            <Text $size={14} $color="#fff" $ls={-0.45}>25°C</Text>
            <Text $size={14} $color="#fff" $ls={-0.45}>Sunny</Text>
          </WeatherGroup>
          <TraySlot $w={24}><S d="M2 11l6-6 6 6" c="#fff" sw={1.300} w={15} /></TraySlot>
          <TraySlot $w={24}><Cam /></TraySlot>
          <TraySlot $w={24}><Battery /></TraySlot>
          <TraySlot $w={24}><Wifi /></TraySlot>
          <TraySlot $w={24}><Volume /></TraySlot>
          <Clock>
            <Text $size={12} $color="#fff" $ls={-0.52}>09:48</Text>
            <Text $size={12} $color="#fff" $ls={-0.55}>25/09/2024</Text>
          </Clock>
          <NoticeSlot $w={48}><Notice /></NoticeSlot>
          <ShowDesktop />
        </Tray>
      </Taskbar>
    </Screen>
  );
}
